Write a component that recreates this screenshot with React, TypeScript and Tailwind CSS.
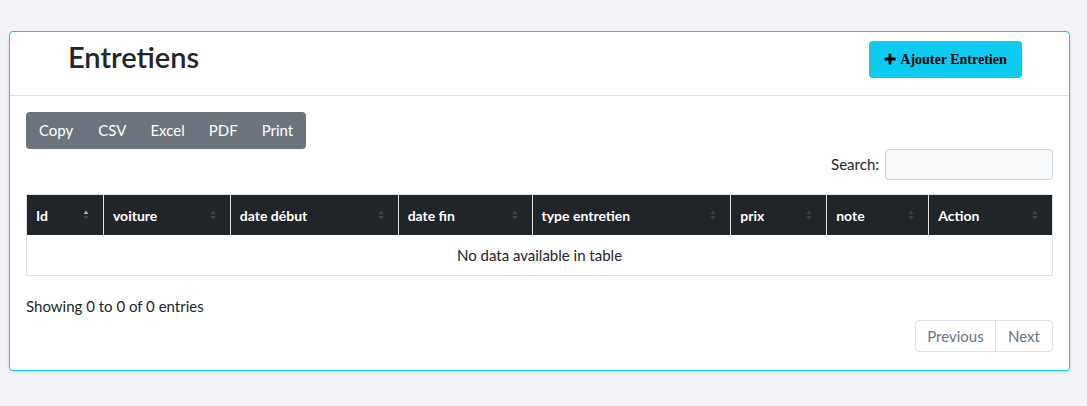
import React from "react";

const cols = [
  { name: "Id", w: 77 },
  { name: "voiture", w: 127 },
  { name: "date début", w: 168 },
  { name: "date fin", w: 134 },
  { name: "type entretien", w: 199 },
  { name: "prix", w: 96 },
  { name: "note", w: 102 },
  { name: "Action", w: 123 },
];

function SortIcon({ active }: { active?: boolean }) {
  return (
    <svg width="6" height="12" viewBox="0 0 6 12" className="shrink-0">
      <path d="M3 1.5 L5.5 5 L0.5 5 Z" fill={active ? "#aeb2b6" : "#41464b"} />
      <path d="M3 10.5 L5.5 7 L0.5 7 Z" fill="#41464b" />
    </svg>
  );
}

export default function App() {
  return (
    <div
      className="w-[1087px] h-[406px] bg-[#f3f4f7] pt-[31px] pl-[9px]"
      style={{ fontFamily: "Lato, 'Noto Sans', sans-serif" }}
    >
      <div className="w-[1061px] h-[340px] bg-white border border-[#0dcaf0] rounded-[4px] shadow-[0_1px_3px_rgba(0,0,0,0.12)]">
        <div className="h-[64px] border-b border-[#dee2e6] flex items-center justify-between pl-[58px] pr-[47px]">
          <h1 className="text-[29px] font-semibold text-[#212529] leading-none -mt-[15px]">Entretiens</h1>
          <button
            className="w-[153px] h-[37px] bg-[#0dcaf0] rounded-[4px] flex items-center justify-center gap-[4px] text-black font-bold text-[14px] -mt-[9px]"
            style={{ fontFamily: "'Liberation Serif', 'Times New Roman', serif" }}
          >
            <svg width="12" height="12" viewBox="0 0 12 12">
              <path d="M6 0.5 V11.5 M0.5 6 H11.5" stroke="#000" strokeWidth="2.8" />
            </svg>
            Ajouter Entretien
          </button>
        </div>
        <div className="px-[16px] pt-[16px]">
          <div className="flex">
            <div className="flex h-[37px] bg-[#6c757d] rounded-[4px] text-white text-[15px] items-center">
              <span className="px-[13px]">Copy</span>
              <span className="px-[12px]">CSV</span>
              <span className="px-[12px]">Excel</span>
              <span className="px-[12px]">PDF</span>
              <span className="pl-[12px] pr-[13px]">Print</span>
            </div>
          </div>
          <div className="flex justify-end items-center gap-[6px]">
            <span className="text-[15px] text-[#212529]">Search:</span>
            <div className="w-[168px] h-[31px] rounded-[4px] border border-[#ced4da] bg-[#f8f9fa]" />
          </div>
          <div className="mt-[14px] border border-[#dee2e6] w-[1027px]">
            <div className="flex bg-[#212529] h-[40px]">
              {cols.map((c, i) => (
                <div
                  key={c.name}
                  className={`flex items-center justify-between pl-[9px] pr-[14px] text-white font-bold text-[14px] ${i < cols.length - 1 ? "border-r border-[#dee2e6]" : ""}`}
                  style={{ width: c.w }}
                >
                  <span>{c.name}</span>
                  <SortIcon active={i === 0} />
                </div>
              ))}
            </div>
            <div className="h-[40px] flex items-center justify-center text-[15px] text-[#212529]">
              No data available in table
            </div>
          </div>
          <div className="mt-[20px] text-[15px] leading-[20px] text-[#212529]">Showing 0 to 0 of 0 entries</div>
          <div className="flex justify-end mt-[4px]">
            <div className="flex h-[32px] border border-[#dee2e6] rounded-[4px] text-[15px] text-[#6c757d]">
              <span className="w-[80px] flex items-center justify-center border-r border-[#dee2e6]">Previous</span>
              <span className="w-[56px] flex items-center justify-center">Next</span>
            </div>
          </div>
        </div>
      </div>
    </div>
  );
}
